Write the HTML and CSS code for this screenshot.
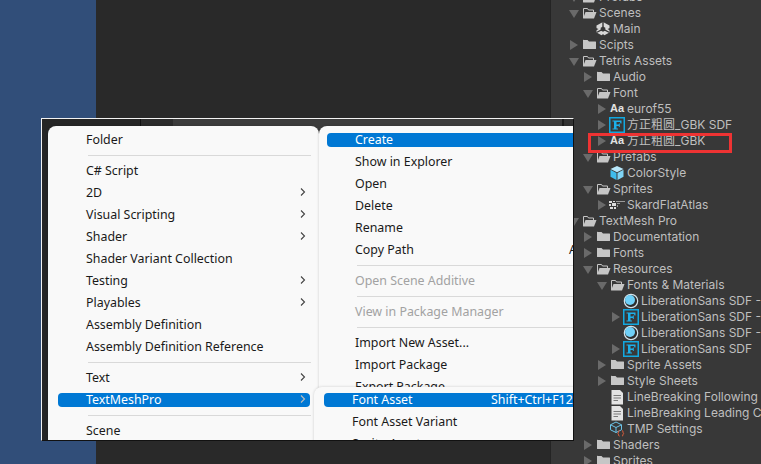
FILE: index.html
```html
<!DOCTYPE html>
<html lang="en">
<head>
    <meta charset="UTF-8">
    <meta name="viewport" content="width=device-width, initial-scale=1.0">
    <title>Project window - Create menu</title>
    <link rel="stylesheet" href="styles.css">
</head>
<body>
    <svg class="defs" width="0" height="0">
        <symbol id="i-folder" viewBox="0 0 16 16"><path d="M2.500 3h4l1.500 1.500h6.500a.5.5 0 0 1 .5.500v6.500a.5.5 0 0 1-.5.500h-12a.5.5 0 0 1-.5-.5v-8.500a.5.5 0 0 1 .5-.5z" fill="#c6c6c6"/></symbol>
        <symbol id="i-open" viewBox="0 0 16 16"><path d="M2.500 13V3.500h4l1 1.500h5V7" fill="none" stroke="#c6c6c6"/><path d="M4.500 7h11l-2.500 6.500H2z" fill="#c6c6c6"/></symbol>
        <symbol id="i-font" viewBox="0 0 16 16"><rect x=".75" y=".75" width="14.500" height="14.500" fill="none" stroke="#12a8e0" stroke-width="1.500"/><path d="M3.500 3.500h9v3h-1l-.5-1.500H7.500v2.500h2.200l.3-1h.8v3.500h-.8l-.3-1H7.500v2.500H9v1H3.500v-1h1.500V4.500H3.500z" fill="#1cb0ea"/></symbol>
        <symbol id="i-unity" viewBox="0 0 16 16"><path d="M8 1l6.500 3.500v7L8 15l-6.500-3.500v-7z" fill="#d8d8d8"/><path d="M8 8.200V1M8 8.200l6.500 3.300M8 8.200l-6.500 3.300" stroke="#383838" stroke-width="1.400"/><path d="M8 5.500l2.300 1.300v2.700L8 10.800 5.700 9.500V6.800z" fill="#383838"/><path d="M1 7l2.500 1L1 9.500zM15 7l-2.500 1 2.500 1.500zM6 15l2-2 2 2z" fill="#383838"/></symbol>
        <symbol id="i-cube" viewBox="0 0 16 16"><path d="M8 1l6.500 3L8 7.300 1.500 4z" fill="#b8e8fc"/><path d="M1.500 4.800L7.500 8V15L1.500 11.700z" fill="#3fbcec"/><path d="M14.500 4.800L8.500 8V15L14.500 11.700z" fill="#7fd4f6"/></symbol>
        <symbol id="i-material" viewBox="0 0 16 16"><circle cx="8" cy="8" r="6.700" fill="#2c2c2c" stroke="#d4e4ec" stroke-width="1.200"/><circle cx="7" cy="7" r="5" fill="#6fd0f8"/></symbol>
        <symbol id="i-doc" viewBox="0 0 16 16"><path d="M2.500 1h8.500l3 3v11.500h-11.500z" fill="#e4e4e4"/><path d="M4.500 6.500h7.500M4.500 9h7.500M4.500 11.500h4.500" stroke="#7a7a7a"/></symbol>
        <symbol id="i-settings" viewBox="0 0 16 16"><path d="M7 1l5.500 2.800v5L7 11.500 1.500 8.800v-5zM1.500 3.800L7 6.500l5.500-2.700M7 6.500v5" fill="none" stroke="#6cc4ea"/><path d="M10.500 9.500c-1.500 0-.5 2.500-1.700 2.800 1.200.3.200 2.800 1.700 2.800M13 9.500c1.500 0 .5 2.500 1.700 2.800-1.200.3-.2 2.800-1.700 2.800" fill="none" stroke="#e8603c"/></symbol>
        <symbol id="i-atlas" viewBox="0 0 16 16"><path d="M0 4h3v2H0zM4 4h2v1H4zM0 7h2v2H0zM3 6h4v3H3zM1 10h3v2H1zM5 10h2v2H5z" fill="#dcdcdc"/><path d="M7 4h9v1H7zM8 6h3v1H8zM8 8h1v2H8z" fill="#9a9a9a"/></symbol>
        <symbol id="i-chevron" viewBox="0 0 8 10"><path d="M2 1.500L5.500 5 2 8.500" fill="none" stroke="#444" stroke-width="1.100"/></symbol>
    </svg>

    <div class="desktop">
        <div class="side-blue"></div>
        <div class="scene-area"></div>

        <div class="project-panel">
            <ul class="tree">
                <li class="row"><span class="arrow down"></span><svg class="icon"><use href="#i-open"/></svg>Prefabs</li>
                <li class="row"><span class="arrow down"></span><svg class="icon"><use href="#i-open"/></svg>Scenes</li>
                <li class="row lv1"><span class="arrow none"></span><svg class="icon"><use href="#i-unity"/></svg>Main</li>
                <li class="row"><span class="arrow"></span><svg class="icon"><use href="#i-folder"/></svg>Scipts</li>
                <li class="row"><span class="arrow down"></span><svg class="icon"><use href="#i-open"/></svg>Tetris Assets</li>
                <li class="row lv1"><span class="arrow"></span><svg class="icon"><use href="#i-folder"/></svg>Audio</li>
                <li class="row lv1"><span class="arrow down"></span><svg class="icon"><use href="#i-open"/></svg>Font</li>
                <li class="row lv2"><span class="arrow"></span><b class="aa">Aa</b>eurof55</li>
                <li class="row lv2"><span class="arrow"></span><svg class="icon"><use href="#i-font"/></svg>方正粗圆_GBK SDF</li>
                <li class="row lv2"><span class="arrow"></span><b class="aa">Aa</b>方正粗圆_GBK</li>
                <li class="row lv1"><span class="arrow down"></span><svg class="icon"><use href="#i-open"/></svg>Prefabs</li>
                <li class="row lv2"><span class="arrow none"></span><svg class="icon"><use href="#i-cube"/></svg>ColorStyle</li>
                <li class="row lv1"><span class="arrow down"></span><svg class="icon"><use href="#i-open"/></svg>Sprites</li>
                <li class="row lv2"><span class="arrow"></span><svg class="icon"><use href="#i-atlas"/></svg>SkardFlatAtlas</li>
                <li class="row"><span class="arrow down"></span><svg class="icon"><use href="#i-open"/></svg>TextMesh Pro</li>
                <li class="row lv1"><span class="arrow"></span><svg class="icon"><use href="#i-folder"/></svg>Documentation</li>
                <li class="row lv1"><span class="arrow"></span><svg class="icon"><use href="#i-folder"/></svg>Fonts</li>
                <li class="row lv1"><span class="arrow down"></span><svg class="icon"><use href="#i-open"/></svg>Resources</li>
                <li class="row lv2"><span class="arrow down"></span><svg class="icon"><use href="#i-open"/></svg>Fonts &amp; Materials</li>
                <li class="row lv3"><span class="arrow none"></span><svg class="icon"><use href="#i-material"/></svg>LiberationSans SDF - Drop Shadow</li>
                <li class="row lv3"><span class="arrow"></span><svg class="icon"><use href="#i-font"/></svg>LiberationSans SDF - Fallback</li>
                <li class="row lv3"><span class="arrow none"></span><svg class="icon"><use href="#i-material"/></svg>LiberationSans SDF - Outline</li>
                <li class="row lv3"><span class="arrow"></span><svg class="icon"><use href="#i-font"/></svg>LiberationSans SDF</li>
                <li class="row lv2"><span class="arrow"></span><svg class="icon"><use href="#i-folder"/></svg>Sprite Assets</li>
                <li class="row lv2"><span class="arrow"></span><svg class="icon"><use href="#i-folder"/></svg>Style Sheets</li>
                <li class="row lv2"><span class="arrow none"></span><svg class="icon"><use href="#i-doc"/></svg>LineBreaking Following Characters</li>
                <li class="row lv2"><span class="arrow none"></span><svg class="icon"><use href="#i-doc"/></svg>LineBreaking Leading Characters</li>
                <li class="row lv2"><span class="arrow none"></span><svg class="icon"><use href="#i-settings"/></svg>TMP Settings</li>
                <li class="row lv1"><span class="arrow"></span><svg class="icon"><use href="#i-folder"/></svg>Shaders</li>
                <li class="row lv1"><span class="arrow"></span><svg class="icon"><use href="#i-folder"/></svg>Sprites</li>
            </ul>
        </div>

        <div class="red-box"></div>

        <div class="shot">
            <div class="menu menu-main">
                <div class="item">Folder</div>
                <div class="sep"></div>
                <div class="item">C# Script</div>
                <div class="item">2D<svg class="chev"><use href="#i-chevron"/></svg></div>
                <div class="item">Visual Scripting<svg class="chev"><use href="#i-chevron"/></svg></div>
                <div class="item">Shader<svg class="chev"><use href="#i-chevron"/></svg></div>
                <div class="item">Shader Variant Collection</div>
                <div class="item">Testing<svg class="chev"><use href="#i-chevron"/></svg></div>
                <div class="item">Playables<svg class="chev"><use href="#i-chevron"/></svg></div>
                <div class="item">Assembly Definition</div>
                <div class="item">Assembly Definition Reference</div>
                <div class="sep"></div>
                <div class="item">Text<svg class="chev"><use href="#i-chevron"/></svg></div>
                <div class="item active">TextMeshPro<svg class="chev"><use href="#i-chevron"/></svg></div>
                <div class="sep"></div>
                <div class="item">Scene</div>
            </div>

            <div class="menu menu-asset">
                <div class="item active">Create</div>
                <div class="item">Show in Explorer</div>
                <div class="item">Open</div>
                <div class="item">Delete</div>
                <div class="item">Rename</div>
                <div class="item"><span class="label">Copy Path</span><span>Alt+Ctrl+C</span></div>
                <div class="sep"></div>
                <div class="item disabled">Open Scene Additive</div>
                <div class="sep"></div>
                <div class="item disabled">View in Package Manager</div>
                <div class="sep"></div>
                <div class="item">Import New Asset...</div>
                <div class="item">Import Package</div>
                <div class="item">Export Package</div>
            </div>

            <div class="menu menu-tmp">
                <div class="item active"><span class="label">Font Asset</span><span>Shift+Ctrl+F12</span></div>
                <div class="item">Font Asset Variant</div>
                <div class="item">Sprite Asset</div>
            </div>
        </div>
    </div>
</body>
</html>
```

FILE: styles.css
```css
* {
    box-sizing: border-box;
}

html, body {
    margin: 0;
    height: 100%;
    overflow: hidden;
}

.defs {
    position: absolute;
}

.desktop {
    position: relative;
    display: flex;
    width: 761px;
    height: 464px;
    overflow: hidden;
    background-color: #2a2a2a;
}

.side-blue {
    width: 96px;
    background-color: #314e79;
}

.scene-area {
    width: 454px;
    background-color: #292929;
}

/* Project window */
.project-panel {
    width: 211px;
    background-color: #383838;
    border-left: 1px solid #242424;
    overflow: hidden;
}

.tree {
    list-style: none;
    margin: -11px 0 0;
    padding: 0 0 0 16px;
    width: 400px;
}

.row {
    display: flex;
    align-items: flex-start;
    height: 16px;
    line-height: 15px;
    font-family: Inter, "Noto Sans CJK SC", sans-serif;
    font-size: 12px;
    color: #bfbfbf;
    white-space: nowrap;
}

.lv1 { padding-left: 14px; }
.lv2 { padding-left: 28px; }
.lv3 { padding-left: 42px; }

.arrow {
    flex: none;
    width: 14px;
    height: 16px;
    position: relative;
}

.arrow::before {
    content: "";
    position: absolute;
    left: 3px;
    top: 3px;
    border-style: solid;
    border-width: 5px 0 5px 8px;
    border-color: transparent transparent transparent #6a6a6a;
}

.arrow.down::before {
    left: 2px;
    top: 5px;
    border-width: 8px 5px 0 5px;
    border-color: #6a6a6a transparent transparent transparent;
}

.arrow.none::before {
    display: none;
}

.icon {
    flex: none;
    width: 16px;
    height: 16px;
    margin-right: 2px;
}

.aa {
    flex: none;
    width: 18px;
    font-family: "Liberation Sans", sans-serif;
    font-size: 11px;
    color: #e2e2e2;
    padding-left: 1px;
}

.red-box {
    position: absolute;
    left: 588px;
    top: 133px;
    width: 144px;
    height: 20px;
    border: 3px solid #ee3333;
}

/* Pasted screenshot of the menus */
.shot {
    position: absolute;
    left: 41px;
    top: 118px;
    width: 533px;
    height: 323px;
    overflow: hidden;
    border-style: solid;
    border-width: 1px;
    border-color: #f2f2f2 #111 #111 #f2f2f2;
    background: linear-gradient(90deg, #262626 0 98px, #111 98px 99px, #2c2c2c 99px 131px, #3c3c3c 131px 520px, #1d1d1d 520px 522px, #333 522px);
}

.menu {
    position: absolute;
    display: flex;
    flex-direction: column;
    background-color: #f9f9f9;
    border-radius: 8px 8px 0 0;
    font-family: "Noto Sans", "Noto Sans CJK SC", sans-serif;
    font-size: 12.4px;
    color: #1a1a1a;
    box-shadow: 0 0 3px rgba(0, 0, 0, 0.18);
}

.menu-main {
    left: 6px;
    top: 7px;
    width: 271px;
    height: 340px;
    padding-top: 3px;
}

.menu-asset {
    left: 277px;
    top: 7px;
    width: 320px;
    height: 300px;
    padding-top: 3px;
}

.menu-tmp {
    left: 272px;
    top: 268px;
    width: 320px;
    height: 100px;
    padding-top: 2px;
}

.item {
    display: flex;
    align-items: center;
    flex: none;
    height: 14px;
    margin: 4px 9px 4px 10px;
    padding: 0 0 2px 28px;
    border-radius: 4px;
    white-space: nowrap;
}

.menu-asset .item {
    margin-left: 8px;
    margin-right: 0;
}

.menu-tmp .item {
    margin-right: 0;
}

.menu-asset .label {
    width: 214px;
}

.menu-tmp .label {
    width: 139px;
}

.item.active {
    background-color: #0078d4;
    color: #fff;
}

.item.disabled {
    color: #a2a2a2;
}

.sep {
    flex: none;
    height: 1px;
    margin: 4px 8px 4px 40px;
    background-color: #d9d9d9;
}

.menu-asset .sep {
    margin: 4px 0 4px 38px;
}

.chev {
    width: 8px;
    height: 10px;
    margin-left: auto;
    margin-right: 3px;
}

.item.active .chev {
    filter: invert(1);
}
```
